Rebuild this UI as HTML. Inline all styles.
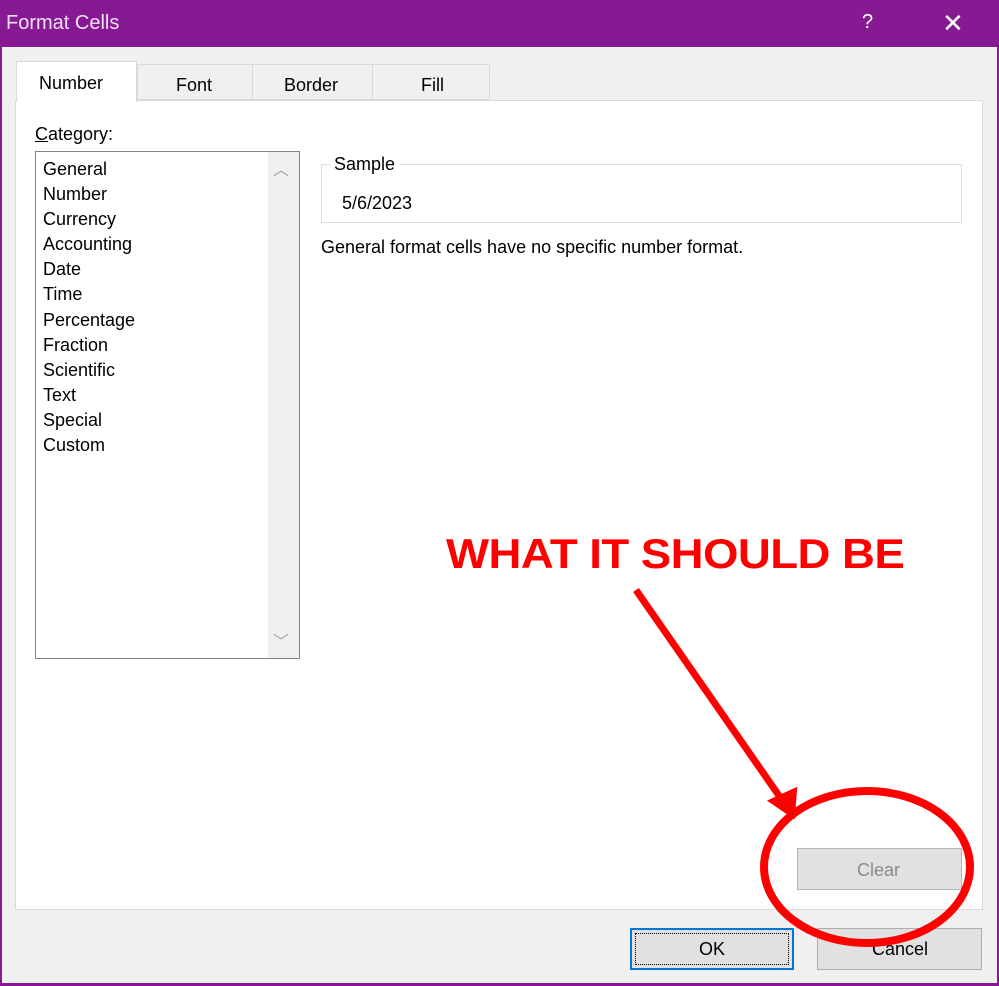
<!DOCTYPE html>
<html><head><style>
body{margin:0;width:999px;height:986px;overflow:hidden;font-family:"Liberation Sans",sans-serif;background:#f0f0f0;position:relative}
.t{position:absolute;white-space:nowrap}
</style></head><body>
<div style="position:absolute;left:0;top:0;width:999px;height:986px;box-sizing:border-box;border:2px solid #861a93;border-top:none;border-bottom:3px solid #861a93"></div>
<div style="position:absolute;left:0;top:0;width:999px;height:47px;background:#861a93"></div>
<div class="t" style="left:6px;top:12px;font-size:20px;color:#f4dff6">Format Cells</div>
<div class="t" style="left:862px;top:11px;font-size:20px;color:#fff">?</div>
<div class="t" style="left:942px;top:8px;font-size:26px;color:#fff">✕</div>
<div style="position:absolute;left:15px;top:100px;width:966px;height:808px;background:#fff;border:1px solid #d9d9d9"></div>
<div style="position:absolute;left:137px;top:64px;width:116px;height:36px;background:#f0f0f0;border:1px solid #d9d9d9;box-sizing:border-box"></div>
<div style="position:absolute;left:253px;top:64px;width:120px;height:36px;background:#f0f0f0;border:1px solid #d9d9d9;border-left:none;box-sizing:border-box"></div>
<div style="position:absolute;left:373px;top:64px;width:117px;height:36px;background:#f0f0f0;border:1px solid #d9d9d9;border-left:none;box-sizing:border-box"></div>
<div style="position:absolute;left:16px;top:61px;width:121px;height:41px;background:#fff;border:1px solid #d9d9d9;border-bottom:none;box-sizing:border-box"></div>
<div class="t" style="left:39px;top:73px;font-size:18px">Number</div>
<div class="t" style="left:176px;top:75px;font-size:18px">Font</div>
<div class="t" style="left:284px;top:75px;font-size:18px">Border</div>
<div class="t" style="left:421px;top:75px;font-size:18px">Fill</div>
<div class="t" style="left:35px;top:124px;font-size:18px"><u>C</u>ategory:</div>
<div style="position:absolute;left:35px;top:151px;width:265px;height:508px;border:1px solid #828282;box-sizing:border-box;background:#fff"></div>
<div style="position:absolute;left:268px;top:152px;width:31px;height:506px;background:#f0f0f0"></div>
<div class="t" style="left:273px;top:156px;font-size:16px;color:#a0a0a0">︿</div>
<div class="t" style="left:273px;top:628px;font-size:16px;color:#a0a0a0">﹀</div>
<div class="t" style="left:43px;top:157px;font-size:18px;line-height:25.1px">General<br>Number<br>Currency<br>Accounting<br>Date<br>Time<br>Percentage<br>Fraction<br>Scientific<br>Text<br>Special<br>Custom</div>
<div style="position:absolute;left:321px;top:164px;width:641px;height:59px;border:1px solid #dcdcdc;box-sizing:border-box"></div>
<div class="t" style="left:330px;top:154px;font-size:18px;background:#fff;padding:0 4px">Sample</div>
<div class="t" style="left:342px;top:193px;font-size:18px">5/6/2023</div>
<div class="t" style="left:321px;top:237px;font-size:18px">General format cells have no specific number format.</div>
<div style="position:absolute;left:797px;top:848px;width:165px;height:42px;background:#e1e1e1;border:1px solid #b4b4b4;box-sizing:border-box"></div>
<div class="t" style="left:857px;top:860px;font-size:18px;color:#8a8a8a">Clear</div>
<div style="position:absolute;left:630px;top:928px;width:164px;height:42px;background:#e1e1e1;border:2px solid #0078d7;box-sizing:border-box"></div>
<div style="position:absolute;left:635px;top:933px;width:154px;height:32px;border:1px dotted #000;box-sizing:border-box"></div>
<div class="t" style="left:699px;top:939px;font-size:18px">OK</div>
<div style="position:absolute;left:817px;top:928px;width:165px;height:42px;background:#e1e1e1;border:1px solid #adadad;box-sizing:border-box"></div>
<div class="t" style="left:872px;top:939px;font-size:18px">Cancel</div>
<div class="t" style="left:446px;top:530px;font-size:42px;font-weight:bold;color:#ff0000;letter-spacing:-0.5px;transform:scaleX(1.085);transform-origin:left top">WHAT IT SHOULD BE</div>
<svg style="position:absolute;left:0;top:0" width="999" height="986">
<line x1="636" y1="590" x2="782" y2="800" stroke="#f00" stroke-width="7"/>
<polygon points="793,816 771,801 795,790" fill="#f00" stroke="#f00" stroke-width="4"/>
<ellipse cx="867" cy="867" rx="103" ry="76" fill="none" stroke="#f00" stroke-width="8"/>
</svg>
</body></html>
